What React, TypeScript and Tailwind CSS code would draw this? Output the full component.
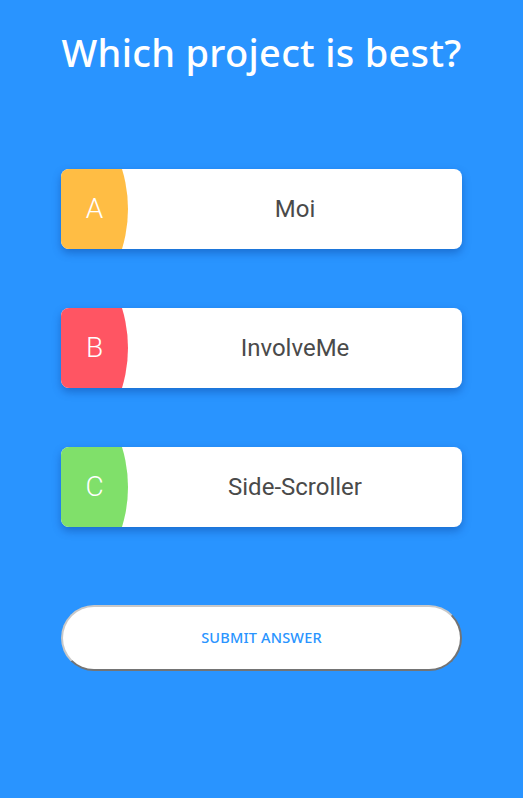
const OPTIONS = [
  { letter: "A", label: "Moi", color: "bg-[#ffbd44]" },
  { letter: "B", label: "InvolveMe", color: "bg-[#ff5563]" },
  { letter: "C", label: "Side-Scroller", color: "bg-[#80e06a]" },
];

export default function App() {
  return (
    <div className="min-h-[798px] w-full bg-[#2994ff] px-[61px] pt-[27px] font-['Noto_Sans',sans-serif]">
      <h1 className="text-center text-[38px] leading-[50px] font-medium tracking-[0.3px] text-white">
        Which project is best?
      </h1>

      <div className="mt-[92px] flex flex-col gap-[59px]">
        {OPTIONS.map((opt) => (
          <OptionCard key={opt.letter} {...opt} />
        ))}
      </div>

      <button className="mt-[78px] flex h-[66px] w-full items-center justify-center rounded-full border-2 border-[#c8c8c8] bg-white [border-style:outset] font-['Noto_Sans',sans-serif] text-[14.5px] font-medium tracking-[0.2px] text-[#2994ff]">
        SUBMIT ANSWER
      </button>
    </div>
  );
}

function OptionCard({
  letter,
  label,
  color,
}: {
  letter: string;
  label: string;
  color: string;
}) {
  return (
    <div className="relative flex h-[80px] overflow-hidden rounded-lg bg-white shadow-[0_4px_8px_rgba(0,40,120,0.35)]">
      <div className={`absolute left-[-205px] top-[-96px] h-[272px] w-[272px] rounded-full ${color}`} />
      <div className="relative flex w-[67px] items-center justify-center font-['Roboto',sans-serif] text-[28px] font-light text-white">
        {letter}
      </div>
      <div className="flex flex-1 items-center justify-center font-['Roboto',sans-serif] text-[24px] text-[#4a4a4a]">
        {label}
      </div>
    </div>
  );
}
